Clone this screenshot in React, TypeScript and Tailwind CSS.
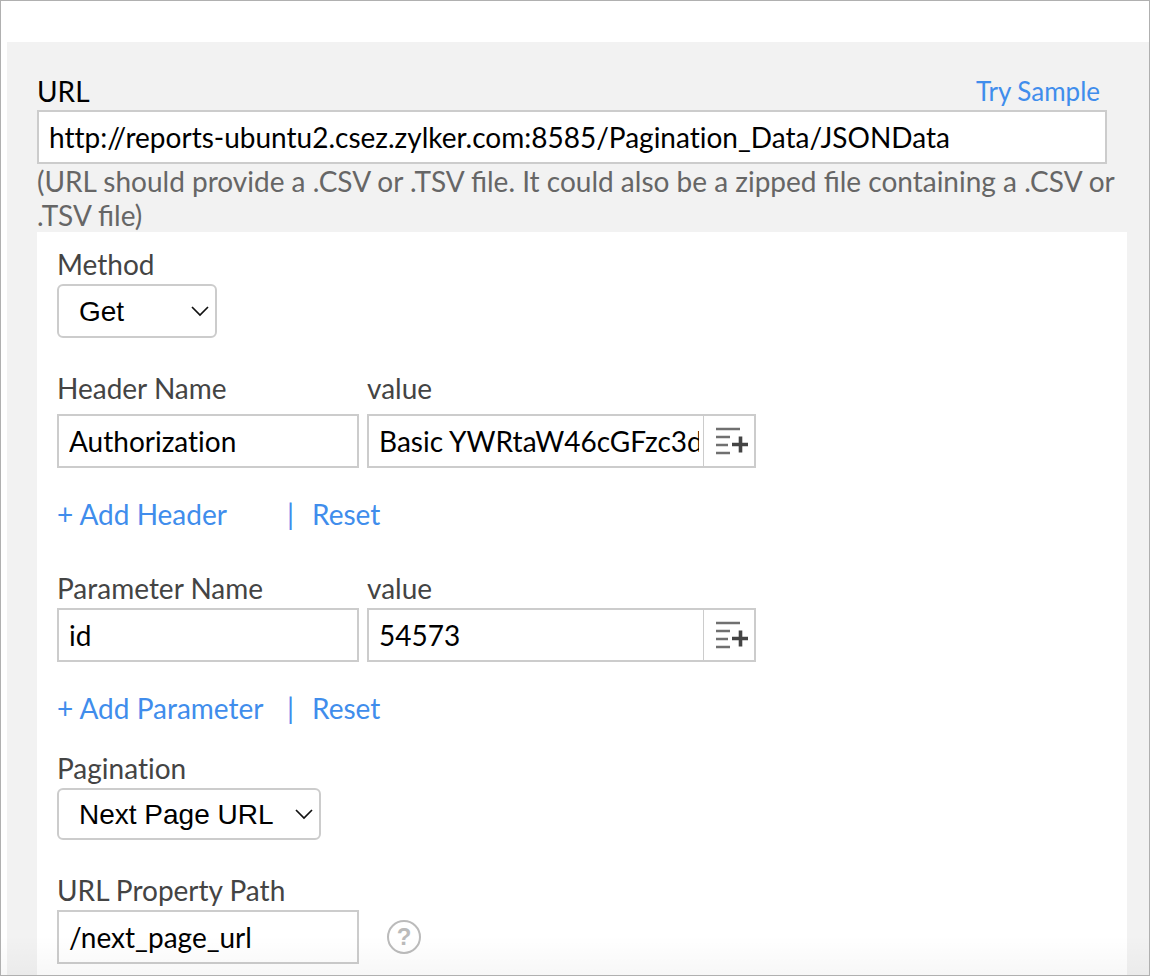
import { useState } from "react";
import type { ReactNode } from "react";

const inputClass =
  "h-[54px] border-2 border-[#cccccc] bg-white px-[10px] text-[28px] text-black outline-none";
const labelClass = "block leading-[34px] text-[#444444]";
const linkClass = "cursor-pointer text-left text-[#408dec]";

function AddListIcon() {
  return (
    <svg width="34" height="28" viewBox="0 0 34 28" fill="none" aria-hidden="true">
      <path d="M2 2h24M2 10h14M2 18h12M2 26h14" stroke="#707070" strokeWidth="2.4" />
      <path d="M18 17.500h16M26.500 9.500v16" stroke="#444444" strokeWidth="3.600" />
    </svg>
  );
}

type SelectProps = {
  id: string;
  label: string;
  options: string[];
  className: string;
};

function SelectField({ id, label, options, className }: SelectProps) {
  const [value, setValue] = useState(options[0]);

  return (
    <div>
      <label htmlFor={id} className={labelClass}>
        {label}
      </label>
      <div className={`relative mt-[3px] ${className}`}>
        <select
          id={id}
          value={value}
          onChange={(e) => setValue(e.target.value)}
          className="h-full w-full appearance-none rounded-[6px] border-2 border-[#cccccc] bg-white pt-[2px] pl-5 font-['Liberation_Sans',sans-serif] text-[28px] text-black outline-none"
        >
          {options.map((option) => (
            <option key={option}>{option}</option>
          ))}
        </select>
        <svg
          className="pointer-events-none absolute inset-y-0 right-2 my-auto"
          width="18"
          height="12"
          viewBox="0 0 18 12"
          fill="none"
          aria-hidden="true"
        >
          <path d="M1 2l8 8 8-8" stroke="#111111" strokeWidth="1.700" />
        </svg>
      </div>
    </div>
  );
}

type PairProps = {
  id: string;
  nameLabel: string;
  name: string;
  value: string;
  addLabel: string;
  fieldGap: string;
};

function PairFields({ id, nameLabel, name, value, addLabel, fieldGap }: PairProps) {
  const [currentName, setCurrentName] = useState(name);
  const [currentValue, setCurrentValue] = useState(value);

  const handleReset = () => {
    setCurrentName("");
    setCurrentValue("");
  };

  return (
    <div>
      <div className="flex gap-2">
        <div className="w-[302px]">
          <label htmlFor={`${id}-name`} className={labelClass}>
            {nameLabel}
          </label>
          <input
            id={`${id}-name`}
            type="text"
            value={currentName}
            onChange={(e) => setCurrentName(e.target.value)}
            className={`${inputClass} ${fieldGap} block w-full`}
          />
        </div>
        <div className="w-[389px]">
          <label htmlFor={`${id}-value`} className={labelClass}>
            value
          </label>
          <div className={`${fieldGap} flex h-[54px] border-2 border-[#cccccc] bg-white`}>
            <input
              id={`${id}-value`}
              type="text"
              value={currentValue}
              onChange={(e) => setCurrentValue(e.target.value)}
              className="mr-1 ml-[10px] min-w-0 flex-1 text-[28px] text-black outline-none"
            />
            <button
              type="button"
              aria-label="Insert value"
              className="flex w-[51px] cursor-pointer items-center justify-end border-l border-[#cccccc] pr-[6px]"
            >
              <AddListIcon />
            </button>
          </div>
        </div>
      </div>
      <div className="mt-[29px] flex leading-[34px] text-[#408dec]">
        <button type="button" className={`${linkClass} w-[230px]`}>
          {addLabel}
        </button>
        <span className="w-[25px]">|</span>
        <button type="button" onClick={handleReset} className={linkClass}>
          Reset
        </button>
      </div>
    </div>
  );
}

function Panel({ children }: { children: ReactNode }) {
  return <div className="flex-1 bg-white px-5 pt-[15px] pb-[11px]">{children}</div>;
}

export default function App() {
  const [url, setUrl] = useState(
    "http://reports-ubuntu2.csez.zylker.com:8585/Pagination_Data/JSONData"
  );
  const [path, setPath] = useState("/next_page_url");

  return (
    <div className="relative flex min-h-screen flex-col border border-[#b0b0b0] bg-white pt-[41px] pl-[6px] font-[Lato,sans-serif] text-[28px] [font-variant-ligatures:none]">
      <form
        onSubmit={(e) => e.preventDefault()}
        className="flex flex-1 flex-col bg-[#f2f2f2] pt-8 pr-[22px] pl-[30px]"
      >
        <div className="pr-5">
          <div className="flex items-center justify-between pr-[7px] pb-[2px] leading-[34px]">
            <label htmlFor="url" className="text-black">
              URL
            </label>
            <a href="#sample" className="text-[26px] text-[#408dec]">
              Try Sample
            </a>
          </div>
          <input
            id="url"
            type="text"
            value={url}
            onChange={(e) => setUrl(e.target.value)}
            className={`${inputClass} block w-full`}
          />
        </div>
        <p className="leading-[34px] text-[#666666] [font-variant-ligatures:normal]">
          (URL should provide a .CSV or .TSV file. It could also be a zipped file containing a .CSV
          or .TSV file)
        </p>

        <Panel>
          <SelectField
            id="method"
            label="Method"
            options={["Get", "Post"]}
            className="h-[54px] w-[160px]"
          />
          <div className="mt-[33px]">
            <PairFields
              id="header"
              nameLabel="Header Name"
              name="Authorization"
              value="Basic YWRtaW46cGFzc3dvcmQ="
              addLabel="+ Add Header"
              fieldGap="mt-[9px]"
            />
          </div>
          <div className="mt-10">
            <PairFields
              id="parameter"
              nameLabel="Parameter Name"
              name="id"
              value="54573"
              addLabel="+ Add Parameter"
              fieldGap="mt-[3px]"
            />
          </div>
          <div className="mt-[26px]">
            <SelectField
              id="pagination"
              label="Pagination"
              options={["Next Page URL", "None"]}
              className="h-[52px] w-[264px]"
            />
          </div>
          <div className="mt-[33px]">
            <label htmlFor="path" className={labelClass}>
              URL Property Path
            </label>
            <div className="mt-[3px] flex items-center gap-7">
              <input
                id="path"
                type="text"
                value={path}
                onChange={(e) => setPath(e.target.value)}
                className={`${inputClass} w-[302px]`}
              />
              <button
                type="button"
                aria-label="Help"
                className="flex size-[34px] cursor-pointer items-center justify-center rounded-full border-2 border-[#bbbbbb] font-['Liberation_Sans',sans-serif] text-2xl font-bold text-[#bbbbbb]"
              >
                ?
              </button>
            </div>
          </div>
        </Panel>
      </form>
      {/* soft shade along the lower edge */}
      <div className="pointer-events-none absolute inset-x-0 bottom-0 h-10 bg-linear-to-t from-black/3 to-transparent" />
    </div>
  );
}
